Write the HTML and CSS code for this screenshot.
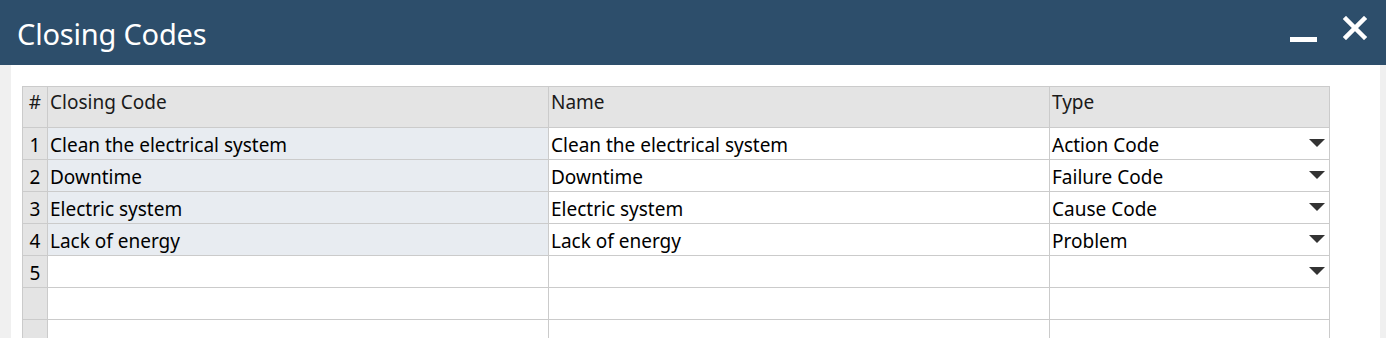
FILE: index.html
```html
<!DOCTYPE html>
<html>
<head>
<meta charset="utf-8">
<link rel="stylesheet" href="styles.css">
</head>
<body>
<div class="window">
  <header class="titlebar">
    <h1 class="title">Closing Codes</h1>
    <div class="controls">
      <span class="minimize"></span>
      <svg class="close" width="24" height="24" viewBox="0 0 24 24"><path d="M3 3 L21 21 M21 3 L3 21" stroke="#fff" stroke-width="4.5" stroke-linecap="square"/></svg>
    </div>
  </header>
  <div class="body">
    <div class="content">
      <table class="grid">
        <colgroup>
          <col class="c-num"><col class="c-code"><col class="c-name"><col class="c-type">
        </colgroup>
        <thead>
          <tr><th>#</th><th>Closing Code</th><th>Name</th><th>Type</th></tr>
        </thead>
        <tbody>
          <tr><td class="num">1</td><td class="key">Clean the electrical system</td><td>Clean the electrical system</td><td class="type">Action Code<span class="arrow"></span></td></tr>
          <tr><td class="num">2</td><td class="key">Downtime</td><td>Downtime</td><td class="type">Failure Code<span class="arrow"></span></td></tr>
          <tr><td class="num">3</td><td class="key">Electric system</td><td>Electric system</td><td class="type">Cause Code<span class="arrow"></span></td></tr>
          <tr><td class="num">4</td><td class="key">Lack of energy</td><td>Lack of energy</td><td class="type">Problem<span class="arrow"></span></td></tr>
          <tr><td class="num">5</td><td></td><td></td><td class="type"><span class="arrow"></span></td></tr>
          <tr><td class="num"></td><td></td><td></td><td></td></tr>
          <tr><td class="num"></td><td></td><td></td><td></td></tr>
        </tbody>
      </table>
    </div>
  </div>
</div>
</body>
</html>
```
FILE: styles.css
```css
* { box-sizing: border-box; }
html, body { margin: 0; padding: 0; }
body {
  width: 1386px;
  height: 338px;
  overflow: hidden;
  background: #ffffff;
  font-family: "Noto Sans", "Open Sans", sans-serif;
  color: #000;
}
.window { display: flex; flex-direction: column; height: 338px; width: 1386px; }
.titlebar {
  height: 65px;
  background: #2d4e6b;
  display: flex;
  align-items: center;
  justify-content: space-between;
  padding: 0 19px 0 17px;
  flex: none;
}
.title {
  margin: 0;
  font-weight: 400;
  font-size: 29px;
  color: #ffffff;
  letter-spacing: -0.2px;
  padding-top: 2px;
}
.controls { display: flex; align-items: flex-start; gap: 26px; height: 40px; }
.minimize {
  display: block;
  width: 27px;
  height: 5px;
  background: #fff;
  margin-top: 24px;
}
.close { display: block; margin-top: 3px; }
.body {
  flex: 1;
  display: flex;
  background: #f0f0f0;
  padding: 0 0 0 11px;
}
.content {
  flex: none;
  width: 1369px;
  background: #fff;
  padding: 21px 0 0 11px;
}
.grid {
  border-collapse: collapse;
  table-layout: fixed;
  width: 1307px;
  font-size: 19px;
}
.c-num { width: 25px; }
.c-code { width: 501px; }
.c-name { width: 501px; }
.c-type { width: 280px; }
.grid th, .grid td {
  border: 1px solid #cbcbcb;
  padding: 0 2px;
  white-space: nowrap;
  overflow: hidden;
  line-height: 26px;
}
.grid th {
  background: #e4e4e4;
  height: 41px;
  font-weight: 400;
  text-align: left;
  vertical-align: top;
  padding-top: 2px;
  color: #1a1a1a;
}
.grid th:first-child { text-align: center; padding: 2px 0 0 0; }
.grid td { height: 32px; padding-top: 2px; }
.grid td.num { background: #e4e4e4; text-align: center; padding: 2px 0 0 0; }
.grid td.key { background: #e8ecf1; }
.grid td.type { position: relative; }
.arrow {
  position: absolute;
  right: 4px;
  top: 11px;
  width: 0;
  height: 0;
  border-left: 8px solid transparent;
  border-right: 8px solid transparent;
  border-top: 8px solid #333;
}
```
